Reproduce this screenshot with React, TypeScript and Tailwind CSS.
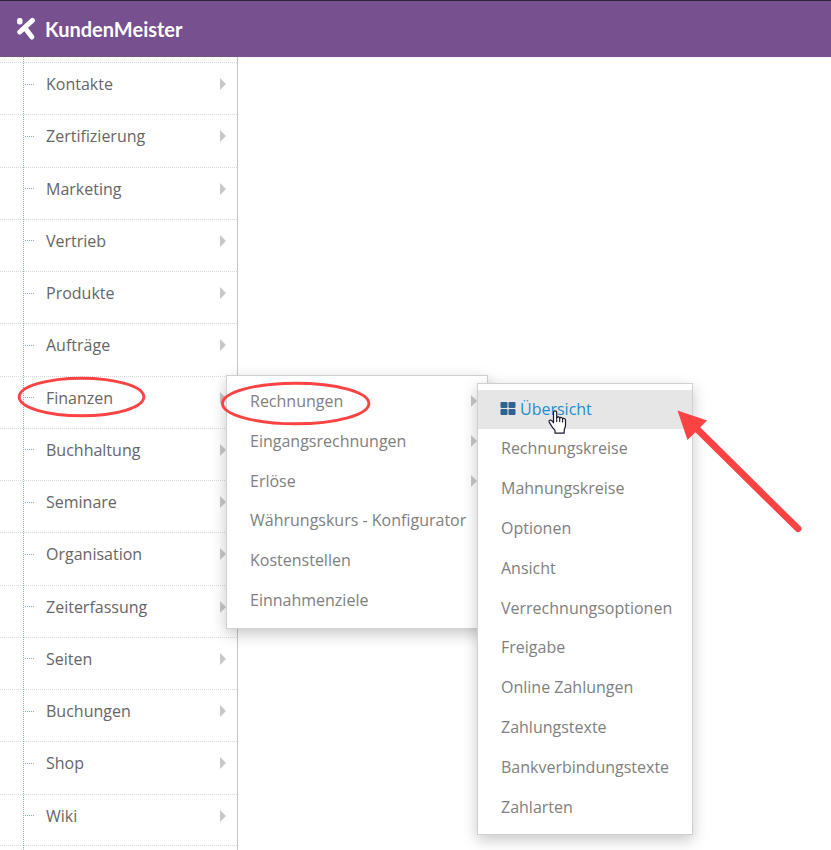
import React from "react";

type Item = { label: string; children?: Item[]; active?: boolean; hasMore?: boolean };

const invoices: Item[] = [
  { label: "Übersicht", active: true },
  { label: "Rechnungskreise" },
  { label: "Mahnungskreise" },
  { label: "Optionen" },
  { label: "Ansicht" },
  { label: "Verrechnungsoptionen" },
  { label: "Freigabe" },
  { label: "Online Zahlungen" },
  { label: "Zahlungstexte" },
  { label: "Bankverbindungstexte" },
  { label: "Zahlarten" },
];

const finance: Item[] = [
  { label: "Rechnungen", hasMore: true, children: invoices },
  { label: "Eingangsrechnungen", hasMore: true },
  { label: "Erlöse", hasMore: true },
  { label: "Währungskurs - Konfigurator" },
  { label: "Kostenstellen" },
  { label: "Einnahmenziele" },
];

const sections: Item[] = [
  { label: "Kontakte" },
  { label: "Zertifizierung" },
  { label: "Marketing" },
  { label: "Vertrieb" },
  { label: "Produkte" },
  { label: "Aufträge" },
  { label: "Finanzen", children: finance },
  { label: "Buchhaltung" },
  { label: "Seminare" },
  { label: "Organisation" },
  { label: "Zeiterfassung" },
  { label: "Seiten" },
  { label: "Buchungen" },
  { label: "Shop" },
  { label: "Wiki" },
];

function Caret() {
  return (
    <svg className="h-3 w-[6px] shrink-0" viewBox="0 0 6 12" aria-hidden="true">
      <path d="M0 0L6 6L0 12Z" fill="#c8c8c8" />
    </svg>
  );
}

function Logo() {
  return (
    <svg className="h-6 w-5" viewBox="0 0 20 24" aria-hidden="true">
      <g stroke="#fff" strokeWidth="5" strokeLinecap="round" fill="none">
        <path d="M3.8 15L16.4 3.4" />
        <path d="M9.4 11.4L15.9 20" />
      </g>
      <rect x="1.1" y="1" width="5.4" height="6.4" rx="2.2" fill="#fff" />
    </svg>
  );
}

function OverviewIcon() {
  return (
    <svg className="h-[13px] w-4 shrink-0" viewBox="0 0 16 13" fill="#2f6191" aria-hidden="true">
      <rect x="0.5" y="0" width="7" height="6" rx="1" />
      <rect x="8.5" y="0" width="7" height="6" rx="1" />
      <rect x="0.5" y="7" width="7" height="6" rx="1" />
      <rect x="8.5" y="7" width="7" height="6" rx="1" />
    </svg>
  );
}

function FlyoutRow({ item }: { item: Item }) {
  return (
    <a
      href="#"
      className={
        item.active
          ? "flex h-full items-center gap-1 bg-[#e6e6e6] pr-3 pb-[2px] pl-[22px] text-[#1b8fd0]"
          : "flex h-full items-center justify-between pr-[10px] pb-[2px] pl-[23px]"
      }
    >
      {item.active && <OverviewIcon />}
      <span className="whitespace-nowrap">{item.label}</span>
      {item.hasMore && <Caret />}
    </a>
  );
}

const panel =
  "absolute z-10 grid auto-rows-fr border border-[#d0d0d0] bg-white text-[#808080] shadow-[0_5px_14px_rgba(0,0,0,0.22)]";

function Sidebar() {
  return (
    <nav className="relative w-[238px] shrink-0 border-r border-[#c6c6c6] pt-[5px] pb-1">
      <div className="absolute inset-y-0 left-[23px] border-l border-dotted border-[#7fabd0]" />
      <ul className="grid h-[784px] auto-rows-fr">
        {sections.map((section) => (
          <li
            key={section.label}
            className="relative border-t border-dotted border-[#d6dadd] last:border-b"
          >
            <a href="#" className="flex h-[42px] items-center pr-[11px] pl-[25px]">
              <span className="mr-3 w-[9px] border-t border-dotted border-[#7fabd0]" />
              <span className="flex-1">{section.label}</span>
              <Caret />
            </a>
            {section.children && (
              <ul className={`${panel} -top-[2px] left-[226px] h-[254px] w-[262px] py-[7px]`}>
                {section.children.map((child) => (
                  <li key={child.label} className="relative">
                    <FlyoutRow item={child} />
                    {child.children && (
                      <ul className={`${panel} top-0 left-[250px] h-[452px] w-[216px] py-[6px]`}>
                        {child.children.map((leaf) => (
                          <li key={leaf.label}>
                            <FlyoutRow item={leaf} />
                          </li>
                        ))}
                      </ul>
                    )}
                  </li>
                ))}
              </ul>
            )}
          </li>
        ))}
      </ul>
    </nav>
  );
}

function Annotations() {
  return (
    <svg
      className="pointer-events-none absolute top-0 left-0 z-20 h-[850px] w-[831px]"
      viewBox="0 0 831 850"
      aria-hidden="true"
    >
      <g fill="none" stroke="#fc4343" strokeWidth="2.9">
        <ellipse cx="81.5" cy="397" rx="62.3" ry="18.8" />
        <ellipse cx="295.7" cy="403.5" rx="73.2" ry="20.3" />
      </g>
      <path d="M695 427L798 528.7" stroke="#fc4343" strokeWidth="6.8" strokeLinecap="round" />
      <path d="M677.5 410.5L707 420.5L687.5 440Z" fill="#fc4343" />
      <path
        d="M553.5 412.5c0-2.2 3.2-2.2 3.2 0v5.2c.5-1.3 2.8-1.1 3 .4c.6-1 2.7-.8 2.9.7c.7-.8 2.9-.4 2.9 1.3v5.4c0 2-1.3 3.2-1.3 4.8v2.8h-9.2v-2.6c-1-1.6-2.4-2.5-3.3-4.3l-2.5-4.1c-.8-1.7 1.3-2.7 2.5-1.5l1.8 2.1z"
        fill="#fff"
        stroke="#17172b"
        strokeWidth="1.2"
        strokeLinejoin="round"
      />
      <path d="M556.7 417v5M559.7 418v4M562.6 419v3.4" stroke="#17172b" strokeWidth="1.1" />
    </svg>
  );
}

export default function App() {
  return (
    <div className="relative flex min-h-screen flex-col overflow-hidden bg-white font-['Open_Sans','Noto_Sans',sans-serif] text-base text-[#666]">
      <header className="flex h-[57px] items-center gap-[9px] border-t border-[#2b2730] bg-[#76508f] pl-4">
        <Logo />
        <span className="font-['Lato','Open_Sans',sans-serif] text-xl font-bold text-white">
          KundenMeister
        </span>
      </header>
      <div className="flex flex-1">
        <Sidebar />
        <main className="flex-1" />
      </div>
      <Annotations />
    </div>
  );
}
